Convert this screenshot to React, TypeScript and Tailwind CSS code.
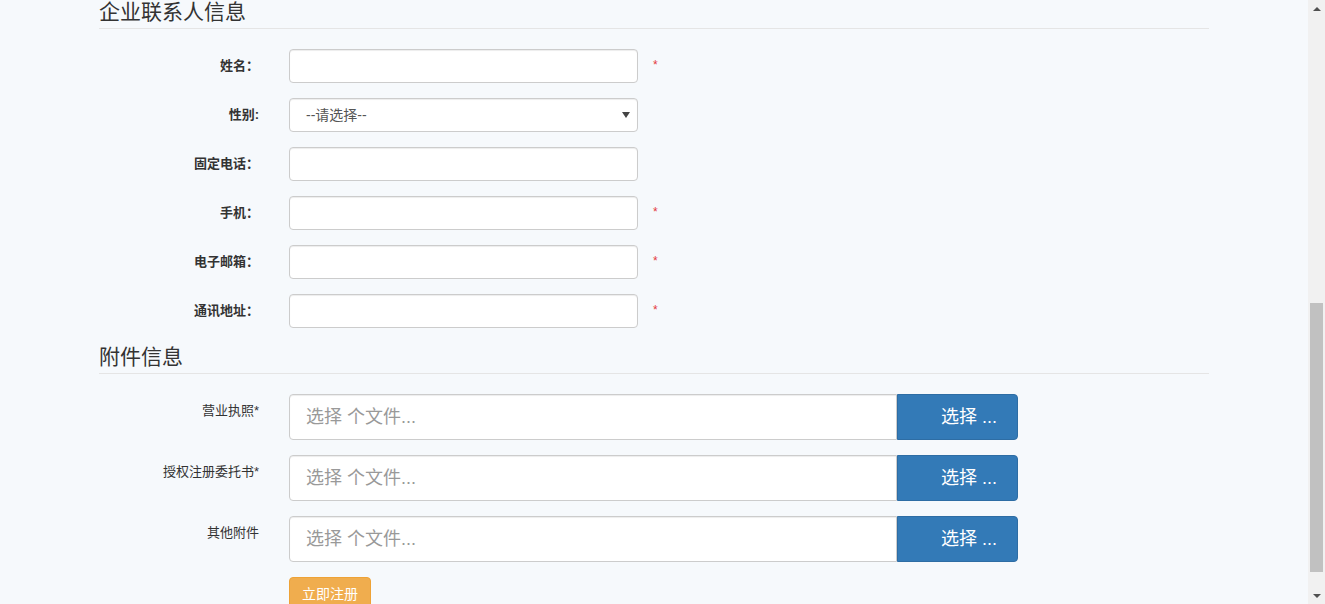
import React from "react";

const FONT = '"Liberation Sans", "Noto Sans CJK SC", sans-serif';

function Row({ label, req, children }: { label: string; req?: boolean; children: React.ReactNode }) {
  return (
    <div className="flex items-start mb-[15px]">
      <div className="w-[160px] shrink-0 text-right pt-[7px] text-[13px] leading-[19px] font-bold text-[#333]">{label}</div>
      <div className="ml-[30px] w-[349px]">{children}</div>
      {req ? (
        <div className="ml-[15px] pt-[7px] text-[12px] leading-[19px] text-[#e4393c]">*</div>
      ) : null}
    </div>
  );
}

function TextInput() {
  return (
    <div className="h-[34px] w-full rounded-[4px] border border-[#ccc] bg-white shadow-[inset_0_1px_1px_rgba(0,0,0,0.075)]" />
  );
}

function FileRow({ label }: { label: string }) {
  return (
    <div className="flex items-start mb-[15px]">
      <div className="w-[160px] shrink-0 text-right pt-[7px] text-[13px] leading-[19px] text-[#333]">{label}</div>
      <div className="ml-[30px] flex h-[46px] w-[729px]">
        <div className="flex flex-1 items-center rounded-l-[4px] border border-[#ccc] bg-white pl-[16px] text-[18px] text-[#999] shadow-[inset_0_1px_1px_rgba(0,0,0,0.075)]">
          选择 个文件...
        </div>
        <div className="flex w-[121px] items-center rounded-r-[4px] border border-[#2e6da4] bg-[#337ab7] pl-[43px] text-[18px] text-white">
          选择 ...
        </div>
      </div>
    </div>
  );
}

function Heading({ text }: { text: string }) {
  return (
    <div className="border-b border-[#e5e5e5] pb-[4px] text-[21px] leading-[24px] text-[#333]">{text}</div>
  );
}

export default function App() {
  return (
    <div className="flex h-[604px] w-[1325px] overflow-hidden bg-[#f6f9fc]" style={{ fontFamily: FONT }}>
      <div className="flex-1">
        <div className="mx-auto w-[1110px]">
          <Heading text="企业联系人信息" />
          <div className="mt-[20px]">
            <Row label="姓名：" req>
              <TextInput />
            </Row>
            <Row label="性别:">
              <div className="relative flex h-[34px] w-full items-center rounded-[4px] border border-[#ccc] bg-white pl-[16px] text-[14px] text-[#555] shadow-[inset_0_1px_1px_rgba(0,0,0,0.075)]">
                --请选择--
                <div className="absolute right-[7px] top-[13px] h-0 w-0 border-l-[4px] border-r-[4px] border-t-[6px] border-l-transparent border-r-transparent border-t-[#444]" />
              </div>
            </Row>
            <Row label="固定电话：">
              <TextInput />
            </Row>
            <Row label="手机：" req>
              <TextInput />
            </Row>
            <Row label="电子邮箱：" req>
              <TextInput />
            </Row>
            <Row label="通讯地址：" req>
              <TextInput />
            </Row>
          </div>
          <div className="mt-[17px]">
            <Heading text="附件信息" />
          </div>
          <div className="mt-[20px]">
            <FileRow label="营业执照*" />
            <FileRow label="授权注册委托书*" />
            <FileRow label="其他附件" />
          </div>
          <div className="ml-[190px]">
            <div className="flex h-[34px] w-[82px] items-center justify-center rounded-[4px] border border-[#eea236] bg-[#f0ad4e] text-[14px] text-white">
              立即注册
            </div>
          </div>
        </div>
      </div>
      <div className="flex w-[17px] shrink-0 flex-col bg-[#f1f1f1]">
        <div className="flex h-[17px] items-center justify-center">
          <div className="h-0 w-0 border-b-[4px] border-l-[4px] border-r-[4px] border-b-[#505050] border-l-transparent border-r-transparent" />
        </div>
        <div className="h-[286px]" />
        <div className="mx-[2px] h-[269px] bg-[#c1c1c1]" />
        <div className="flex-1" />
        <div className="flex h-[17px] items-center justify-center">
          <div className="h-0 w-0 border-t-[4px] border-l-[4px] border-r-[4px] border-t-[#505050] border-l-transparent border-r-transparent" />
        </div>
      </div>
    </div>
  );
}
